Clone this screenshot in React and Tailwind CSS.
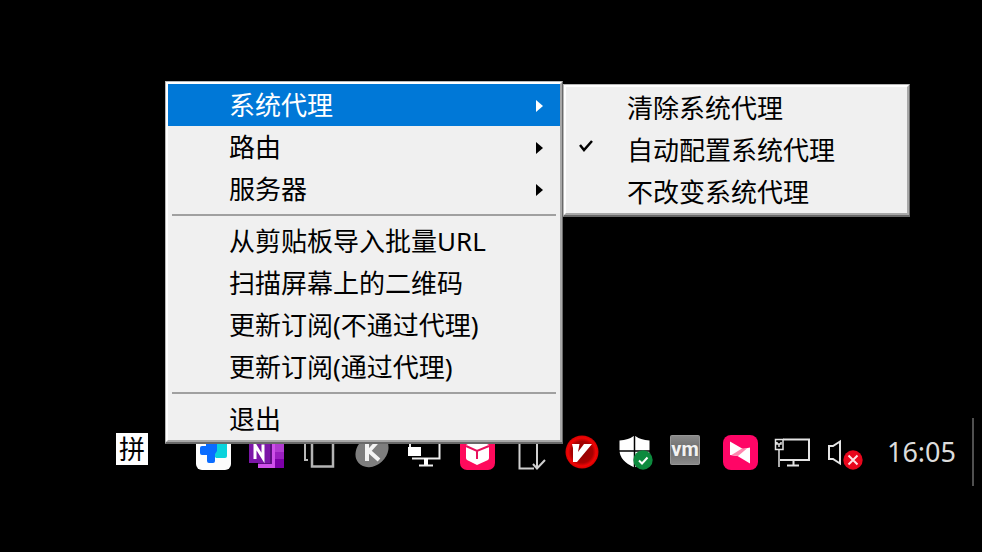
import React from 'react';

const ICON = 'block h-[44px] w-[44px]';

function Icon({ children }) {
  return (
    <svg viewBox="0 0 44 44" className={ICON} fill="none" aria-hidden="true">
      {children}
    </svg>
  );
}

const trayIcons = [
  {
    name: 'todesk',
    art: (
      <Icon>
        <rect x="4" y="5" width="35" height="35" rx="6" fill="#fdfdfd" />
        <path d="M21 12h14v14q0 2-2 2h-9l-3-3z" fill="#0bd3dc" />
        <path d="M14 10h11v11l-2 3v7q0 2-2 2h-4q-2 0-2-2v-6h-5q-2 0-2-2v-5q0-2 2-2h4z" fill="#0a6cff" />
      </Icon>
    ),
  },
  {
    name: 'onenote',
    art: (
      <Icon>
        <path d="M13 5h26v33H13z" fill="#cf50ea" />
        <path d="M30 5h9v17h-9z" fill="#b03ad0" />
        <path d="M30 22h9v7h-9z" fill="#9a1fc0" />
        <path d="M30 29h9v9h-9z" fill="#7d00a8" />
        <path d="M13 5h14v29H13z" fill="#5c0e80" />
        <path d="M4 10h21v23H4z" fill="#7c16a8" />
        <path d="M10 29V15l8 13V14.500" stroke="#fff" strokeWidth="3" />
      </Icon>
    ),
  },
  {
    name: 'windows',
    art: (
      <Icon>
        <path d="M11 30H8V8h3" stroke="#b8b8b8" strokeWidth="2" />
        <path d="M15 8h21v28.500H15z" stroke="#b4b4b4" strokeWidth="2.500" />
      </Icon>
    ),
  },
  {
    name: 'kleopatra',
    art: (
      <Icon>
        <ellipse cx="22" cy="21" rx="18" ry="14.500" transform="rotate(-42 22 21)" fill="#7e7e7e" />
        <path d="M17 11v20M28 11l-9 10 10 9" stroke="#f4f4f4" strokeWidth="4" />
      </Icon>
    ),
  },
  {
    name: 'remote display',
    art: (
      <Icon>
        <path d="M10 28.500h27.500V10H8v7" stroke="#ededed" strokeWidth="2" />
        <path d="M6 17h13v9H6z" fill="#fff" />
        <path d="M22 28h4v7h-4z" fill="#fff" />
        <path d="M17 35.500h14" stroke="#ededed" strokeWidth="2" />
      </Icon>
    ),
  },
  {
    name: 'package',
    art: (
      <Icon>
        <rect x="5" y="5" width="35" height="35" rx="7" fill="#ff0a5c" />
        <path d="M22 9l12 6v13q0 1-1 2l-11 5-10-5q-1-1-1-2V15z" fill="#fff" />
        <path d="M11 16l11 5 12-5M22 21v8" stroke="#e8105c" strokeWidth="2" />
      </Icon>
    ),
  },
  {
    name: 'eject device',
    art: (
      <Icon>
        <path d="M27 38.500H12.500V8H30v30M26 34l4 4.500L38 30" stroke="#d0d0d0" strokeWidth="2" />
      </Icon>
    ),
  },
  {
    name: 'v client',
    art: (
      <Icon>
        <defs>
          <radialGradient id="ring">
            <stop offset="0" stopColor="#8e0000" />
            <stop offset="0.65" stopColor="#a80000" />
            <stop offset="0.85" stopColor="#f00505" />
            <stop offset="1" stopColor="#d40000" />
          </radialGradient>
        </defs>
        <circle cx="22" cy="22" r="16.500" fill="url(#ring)" />
        <path d="M12 14h7.500l-1.500 8 6-8h8L17 32h-4V18z" fill="#fff" />
      </Icon>
    ),
  },
  {
    name: 'security',
    art: (
      <Icon>
        <path d="M21.500 5.500q6 4.500 15 5V20q0 11-15 17.500Q6.500 31 6.500 20v-9.500q9-.5 15-5z" fill="#fff" />
        <path d="M21.500 5v33M6 21h31" stroke="#000" strokeWidth="1.500" />
        <circle cx="30" cy="30" r="9.700" fill="#0d8a3e" />
        <path d="M26 30.500l3 3 5.500-6" stroke="#fff" strokeWidth="2" />
      </Icon>
    ),
  },
  {
    name: 'vmware',
    art: (
      <Icon>
        <defs>
          <linearGradient id="plate" x1="0" y1="0" x2="0" y2="1">
            <stop offset="0" stopColor="#8b8b8b" />
            <stop offset="0.5" stopColor="#6c6c6c" />
            <stop offset="1" stopColor="#8a8a8a" />
          </linearGradient>
        </defs>
        <rect x="5.500" y="5.500" width="29" height="29" rx="1" fill="url(#plate)" stroke="#969696" />
        <text x="20" y="26" textAnchor="middle" fill="#f2f2f2" fontSize="20" fontWeight="700" fontFamily="Roboto, sans-serif">
          vm
        </text>
      </Icon>
    ),
  },
  {
    name: 'todo',
    art: (
      <Icon>
        <rect x="5" y="5" width="35" height="35" rx="8" fill="#ff0566" />
        <path d="M12 11.500L25 19l7-1.500V33.500L19.500 26 12 25z" fill="#fff" />
        <path d="M13.500 25L24 18.500h5L20 26z" fill="#ff86ae" />
      </Icon>
    ),
  },
  {
    name: 'network',
    art: (
      <Icon>
        <path d="M13 9.500h26V30H10M23.500 30v5M17 35.500h12" stroke="#e4e4e4" strokeWidth="2" />
        <path d="M5.500 9.500h7.500v10H5.500zM9 20v17M7 12v2h4v-2M9 14v3" stroke="#e4e4e4" strokeWidth="1.500" />
      </Icon>
    ),
  },
  {
    name: 'muted',
    art: (
      <Icon>
        <path d="M6 16h4l7-4.500v22L10 29H6z" stroke="#e4e4e4" strokeWidth="2" />
        <circle cx="30" cy="30" r="9.700" fill="#e8061c" />
        <path d="M25.500 25.500l9 9M34.500 25.500l-9 9" stroke="#ffe3e6" strokeWidth="2" />
      </Icon>
    ),
  },
];

const mainMenu = [
  [
    { label: '系统代理', submenu: true, active: true },
    { label: '路由', submenu: true },
    { label: '服务器', submenu: true },
  ],
  [
    { label: '从剪贴板导入批量URL' },
    { label: '扫描屏幕上的二维码' },
    { label: '更新订阅(不通过代理)' },
    { label: '更新订阅(通过代理)' },
  ],
  [{ label: '退出' }],
];

const proxyMenu = [
  { label: '清除系统代理' },
  { label: '自动配置系统代理', checked: true },
  { label: '不改变系统代理' },
];

function MenuItem({ label, submenu, active, checked }) {
  return (
    <button
      type="button"
      role="menuitem"
      className={
        'flex h-[42px] w-full items-center pr-4 text-left text-[26px] leading-[42px] whitespace-nowrap ' +
        (active ? 'bg-[#0078d7] text-white' : 'text-black')
      }
    >
      <span className="flex w-[61px] shrink-0 pl-[13px]">
        {checked && (
          <svg viewBox="0 0 14 12" className="mb-2 h-3 w-[14px]" fill="none" aria-hidden="true">
            <path d="M1 5l4 5 8-9" stroke="#000" strokeWidth="2.500" />
          </svg>
        )}
      </span>
      <span className="flex-1">{label}</span>
      {submenu && (
        <svg viewBox="0 0 8 14" className="mt-[2px] h-[14px] w-2" fill="currentColor" aria-hidden="true">
          <path d="M0 1l7 6-7 6z" />
        </svg>
      )}
    </button>
  );
}

const PANEL =
  'border border-b-2 border-t-[#b8b8b8] border-l-[#b8b8b8] border-r-[#696969] border-b-[#696969] bg-[#f0f0f0]';
const BEVEL =
  'border-2 border-t-white border-l-white border-r-[#a8a8a8] border-b-[#a8a8a8]';

export default function App() {
  return (
    <div className="relative flex min-h-screen flex-col justify-end overflow-hidden bg-black pb-[66px] font-['Noto_Sans','Noto_Sans_CJK_SC',sans-serif]">
      <footer className="flex h-[68px] items-center pr-2 pl-[116px]">
        <button
          type="button"
          className="mb-[6px] h-8 w-8 shrink-0 bg-white text-center text-[26px] leading-8 text-black"
        >
          拼
        </button>
        <div className="ml-10 grid flex-1 grid-cols-13">
          {trayIcons.map(({ name, art }) => (
            <button key={name} type="button" aria-label={name} className="flex justify-center">
              {art}
            </button>
          ))}
        </div>
        <time className="ml-4 text-[27px] leading-8 text-[#dcdcdc]">16:05</time>
        <div className="ml-4 h-full w-[2px] bg-[#505050]" />
      </footer>

      <nav className="absolute top-[81px] left-[165px] flex items-start">
        <div role="menu" className={'w-[398px] ' + PANEL}>
          <div className={BEVEL}>
            {mainMenu.map((group, i) => (
              <div key={i} role="group">
                {i > 0 && <hr className="mx-1 my-1 border-t-2 border-[#a0a0a0]" />}
                {group.map((item) => (
                  <MenuItem key={item.label} {...item} />
                ))}
              </div>
            ))}
          </div>
        </div>
        <div role="menu" aria-label="系统代理" className={'mt-[3px] w-[347px] ' + PANEL}>
          <div className={BEVEL}>
            {proxyMenu.map((item) => (
              <MenuItem key={item.label} {...item} />
            ))}
          </div>
        </div>
      </nav>
    </div>
  );
}
